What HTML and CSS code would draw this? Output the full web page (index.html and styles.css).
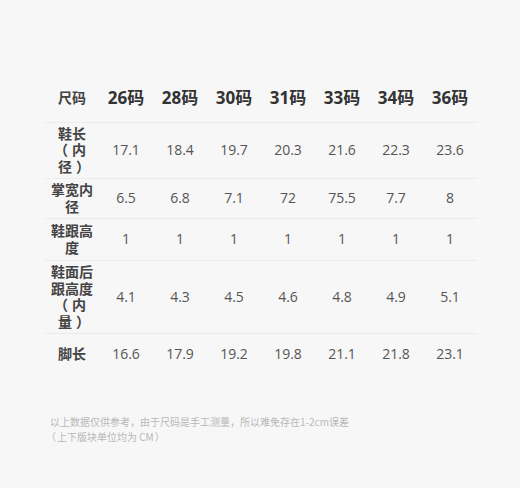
FILE: index.html
```html
<!DOCTYPE html>
<html lang="zh-CN">
<head>
<meta charset="utf-8">
<title>尺码表</title>
<link rel="stylesheet" href="styles.css">
</head>
<body>
<div class="page">
  <table class="size-table">
    <tr class="head">
      <th class="label">尺码</th>
      <th>26码</th><th>28码</th><th>30码</th><th>31码</th><th>33码</th><th>34码</th><th>36码</th>
    </tr>
    <tr>
      <td class="label"><span class="ln">鞋长</span><span class="ln"><span class="ob">（</span><span>内</span></span><span class="ln"><span>径</span><span class="cb">）</span></span></td>
      <td>17.1</td><td>18.4</td><td>19.7</td><td>20.3</td><td>21.6</td><td>22.3</td><td>23.6</td>
    </tr>
    <tr class="short">
      <td class="label"><span class="ln">掌宽内</span><span class="ln">径</span></td>
      <td>6.5</td><td>6.8</td><td>7.1</td><td>72</td><td>75.5</td><td>7.7</td><td>8</td>
    </tr>
    <tr>
      <td class="label"><span class="ln">鞋跟高</span><span class="ln">度</span></td>
      <td>1</td><td>1</td><td>1</td><td>1</td><td>1</td><td>1</td><td>1</td>
    </tr>
    <tr>
      <td class="label"><span class="ln">鞋面后</span><span class="ln">跟高度</span><span class="ln"><span class="ob">（</span><span>内</span></span><span class="ln"><span>量</span><span class="cb">）</span></span></td>
      <td>4.1</td><td>4.3</td><td>4.5</td><td>4.6</td><td>4.8</td><td>4.9</td><td>5.1</td>
    </tr>
    <tr class="last">
      <td class="label">脚长</td>
      <td>16.6</td><td>17.9</td><td>19.2</td><td>19.8</td><td>21.1</td><td>21.8</td><td>23.1</td>
    </tr>
  </table>
  <div class="note">
    <p>以上数据仅供参考，由于尺码是手工测量，所以难免存在1-2cm误差</p>
    <p><span class="ob-s">（</span><span>上下版块单位均为 CM</span><span class="cb-s">）</span></p>
  </div>
</div>
</body>
</html>
```

FILE: styles.css
```css
html, body {
  margin: 0;
  padding: 0;
  background: #f7f7f7;
}
body {
  font-family: "Open Sans", "Noto Sans CJK SC", sans-serif;
  color: #555;
}
.page {
  width: 520px;
  height: 488px;
  box-sizing: border-box;
  padding: 75px 0 0 45px;
}
.size-table {
  border-collapse: collapse;
  table-layout: fixed;
  width: 432px;
}
.size-table th,
.size-table td {
  width: 54px;
  padding: 3px 0;
  text-align: center;
  vertical-align: middle;
  line-height: 16.5px;
}
.size-table tr {
  border-bottom: 1px solid #ececec;
  height: 42px;
}
.size-table tr.short {
  height: 38px;
}
.size-table tr.last {
  border-bottom: none;
  height: 40px;
}
.size-table tr.head {
  height: 47px;
}
.size-table th {
  font-size: 17px;
  font-weight: 700;
  color: #333;
}
.size-table td {
  font-size: 14px;
  color: #555;
}
.size-table .label {
  width: 42px;
  font-family: "Liberation Sans", "Noto Sans CJK SC", sans-serif;
  font-size: 14px;
  font-weight: 700;
  color: #444;
  padding: 3px 6px;
  word-break: break-all;
}
.ln {
  display: block;
  white-space: nowrap;
}
.ob {
  margin-left: -4px;
  margin-right: 4px;
}
.cb {
  margin-left: 4px;
  margin-right: -4px;
}
.note {
  margin-top: 40px;
  padding-left: 5px;
  font-family: "Noto Sans CJK SC", sans-serif;
  font-size: 10px;
  line-height: 15px;
  color: #b8b8b8;
}
.note p {
  margin: 0;
}
.ob-s {
  margin-left: -4px;
  margin-right: 1px;
}
.cb-s {
  margin-left: 1px;
}
```
